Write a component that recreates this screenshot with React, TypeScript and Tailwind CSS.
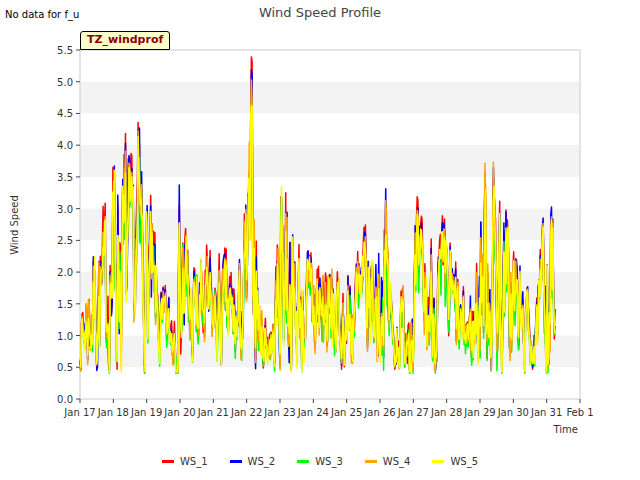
import React from "react"

const X0 = 80, X1 = 580, Y0 = 399, Y1 = 50
const days = ["Jan 17","Jan 18","Jan 19","Jan 20","Jan 21","Jan 22","Jan 23","Jan 24","Jan 25","Jan 26","Jan 27","Jan 28","Jan 29","Jan 30","Jan 31","Feb 1"]
const xs = (d: number) => X0 + (d / 15) * (X1 - X0)
const ys = (v: number) => Y0 - (v / 5.5) * (Y0 - Y1)

// envelope key points (day offset, peak)
const keys: [number, number][] = [
  [0, 1.4],[0.4, 2.7],[0.8, 3.0],[1.1, 4.5],[1.6, 3.6],[1.75, 4.4],[2.1, 3.2],[2.4, 1.8],[2.8, 1.6],[3.0, 3.9],[3.3, 2.2],[3.7, 2.4],[4.0, 2.2],[4.4, 2.3],[4.7, 1.8],[5.0, 3.2],[5.15, 5.3],[5.4, 1.6],[5.8, 1.3],[6.1, 4.8],[6.4, 2.6],[6.8, 2.3],[7.1, 2.5],[7.5, 2.4],[7.8, 1.9],[8.2, 2.2],[8.6, 2.7],[9.0, 2.8],[9.2, 3.4],[9.4, 1.4],[9.8, 2.0],[10.1, 3.1],[10.4, 2.4],[10.8, 2.8],[11.1, 2.7],[11.4, 1.7],[11.8, 1.7],[12.1, 3.9],[12.4, 4.0],[12.7, 3.0],[13.0, 2.8],[13.3, 1.9],[13.7, 1.5],[14.0, 3.6],[14.1, 4.2],[14.25, 2.1],
]
const env = (t: number) => {
  for (let i = 0; i < keys.length - 1; i++) {
    const [a, va] = keys[i], [b, vb] = keys[i + 1]
    if (t >= a && t <= b) return va + ((t - a) / (b - a)) * (vb - va)
  }
  return 2
}
function rng(seed: number) {
  return () => {
    seed |= 0; seed = (seed + 0x6d2b79f5) | 0
    let t = Math.imul(seed ^ (seed >>> 15), 1 | seed)
    t = (t + Math.imul(t ^ (t >>> 7), 61 | t)) ^ t
    return ((t ^ (t >>> 14)) >>> 0) / 4294967296
  }
}
const N = 680
const shared = (() => {
  const r = rng(7); const out: number[] = []; let s = 0.5
  for (let i = 0; i < N; i++) { s = s * 0.5 + r() * 0.5; out.push(s) }
  return out
})()
const series = (seed: number, scale: number, jitter: number) => {
  const r = rng(seed)
  const pts: string[] = []
  for (let i = 0; i < N; i++) {
    const t = (i / (N - 1)) * 14.25
    const e = env(t)
    let v = 0.45 + (e - 0.45) * Math.min(1, Math.max(0, shared[i] * 1.5 - 0.25 + (r() - 0.5) * jitter))
    v = Math.max(0.2, v * scale)
    pts.push(`${xs(t).toFixed(1)},${ys(v).toFixed(1)}`)
  }
  return pts.join(" ")
}
const lines = [
  { name: "WS_1", color: "#ff0000", pts: series(11, 1.04, 0.25) },
  { name: "WS_2", color: "#0000ff", pts: series(22, 1.0, 0.25) },
  { name: "WS_3", color: "#00ff00", pts: series(33, 0.9, 0.3) },
  { name: "WS_4", color: "#ffa500", pts: series(44, 0.97, 0.25) },
  { name: "WS_5", color: "#ffff00", pts: series(55, 0.95, 0.25) },
]

export default function App() {
  const ticks = Array.from({ length: 12 }, (_, i) => i * 0.5)
  return (
    <div className="relative w-[640px] h-[480px] bg-white" style={{ fontFamily: "'DejaVu Sans', sans-serif" }}>
      <div className="absolute left-[5px] top-[7px] text-[10px] text-black">No data for f_u</div>
      <div className="absolute left-0 right-0 top-[3px] text-center text-[13px] text-[#444]">Wind Speed Profile</div>
      <svg width="640" height="480" className="block">
        {ticks.slice(0, 11).map((t, i) => i % 2 === 1 ? (
          <rect key={t} x={X0} y={ys(t + 0.5)} width={X1 - X0} height={ys(t) - ys(t + 0.5)} fill="#f3f3f3" />
        ) : null)}
        <rect x={X0} y={Y1} width={X1 - X0} height={Y0 - Y1} fill="none" stroke="#ccc" />
        {ticks.map(t => (
          <g key={t}>
            <line x1={X0 - 4} x2={X0} y1={ys(t)} y2={ys(t)} stroke="#444" />
            <text x={X0 - 7} y={ys(t) + 4} fontSize="10" textAnchor="end" fill="#333">{t.toFixed(1)}</text>
          </g>
        ))}
        {days.map((d, i) => (
          <g key={d}>
            <line x1={xs(i)} x2={xs(i)} y1={Y0} y2={Y0 + 4} stroke="#444" />
            <text x={xs(i)} y={Y0 + 17} fontSize="10" textAnchor="middle" fill="#333">{d}</text>
          </g>
        ))}
        <text x={18} y={225} fontSize="10" fill="#333" textAnchor="middle" transform="rotate(-90 18 225)">Wind Speed</text>
        <text x={578} y={433} fontSize="10" fill="#333" textAnchor="end">Time</text>
        {lines.map(l => (
          <polyline key={l.name} points={l.pts} fill="none" stroke={l.color} strokeWidth="1.5" strokeLinejoin="round" />
        ))}
      </svg>
      <div className="absolute left-[80px] top-[31px] h-[19px] px-[6px] flex items-center bg-[#ffffcc] border border-black rounded-t-[3px] text-[11px] font-bold text-[#8b0000]">TZ_windprof</div>
      <div className="absolute left-0 right-0 top-[454px] flex justify-center gap-[22px] text-[10px] text-[#333]">
        {lines.map(l => (
          <div key={l.name} className="flex items-center gap-[6px]">
            <span className="w-[12px] h-[3px]" style={{ background: l.color }} />
            {l.name}
          </div>
        ))}
      </div>
    </div>
  )
}
